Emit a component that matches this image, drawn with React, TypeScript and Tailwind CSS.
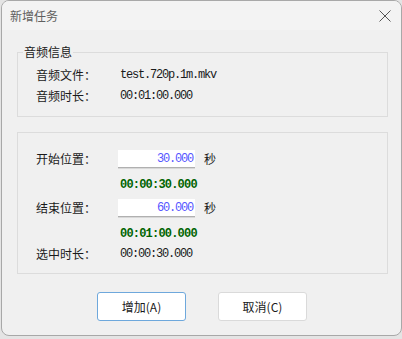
import React from "react";

const cjk = { fontFamily: '"Noto Sans CJK SC", "Liberation Sans", sans-serif' };
const mono = { fontFamily: '"Liberation Mono", "Noto Sans CJK SC", monospace' };

function Label({ children }: { children: React.ReactNode }) {
  return (
    <span className="w-[84px] shrink-0 text-[12px] text-[#1a1a1a]" style={cjk}>
      {children}
    </span>
  );
}

function Value({ children }: { children: React.ReactNode }) {
  return (
    <span className="text-[12px] tracking-[-1.2px] text-[#1a1a1a]" style={mono}>
      {children}
    </span>
  );
}

function Green({ children }: { children: React.ReactNode }) {
  return (
    <div className="flex h-[20px] items-center pl-[84px]">
      <span className="text-[12px] font-bold tracking-[-0.8px] text-[#006400]" style={mono}>
        {children}
      </span>
    </div>
  );
}

function InputRow({ label, value }: { label: string; value: string }) {
  return (
    <div className="flex h-[20px] items-center">
      <Label>{label}</Label>
      <div className="-ml-[2px] flex h-[18px] w-[77px] items-center justify-end border-b border-b-[#b0b0b0] bg-white pr-[2px] shadow-[0_1px_0_#d8d8d8]">
        <span className="text-[12px] tracking-[-1.2px] text-[#5555ff]" style={mono}>
          {value}
        </span>
      </div>
      <span className="ml-[9px] text-[12px] text-[#1a1a1a]" style={cjk}>
        秒
      </span>
    </div>
  );
}

export default function App() {
  return (
    <div className="h-[339px] w-[402px] bg-[#e4e4e4]">
      <div className="ml-[1px] flex h-[336px] w-[401px] flex-col overflow-hidden rounded-[8px] border border-[#a8a8a8] bg-[#f0f0f0]">
        {/* title bar */}
        <div className="flex h-[29px] shrink-0 items-center justify-between bg-[#f3f3f3] pl-[8px] pr-[9px]">
          <span className="text-[12px] text-[#606060]" style={cjk}>
            新增任务
          </span>
          <svg width="12" height="12" viewBox="0 0 12 12" className="mr-[1px]">
            <path d="M0.5 0.5 L11.5 11.5 M11.5 0.5 L0.5 11.5" stroke="#555" strokeWidth="1" fill="none" />
          </svg>
        </div>

        <div className="flex flex-col pl-[15px] pr-[13px]">
          {/* group 1 */}
          <fieldset className="mt-[14px] border border-[#dcdcdc] pb-[10px] pt-[4px]">
            <legend className="ml-[5px] px-[1px] text-[12px] leading-[16px] text-[#1a1a1a]" style={cjk}>
              音频信息
            </legend>
            <div className="flex flex-col pl-[18px]">
              <div className="flex h-[21px] items-center">
                <Label>音频文件：</Label>
                <Value>test.720p.1m.mkv</Value>
              </div>
              <div className="flex h-[21px] items-center">
                <Label>音频时长：</Label>
                <Value>00:01:00.000</Value>
              </div>
            </div>
          </fieldset>

          {/* group 2 */}
          <div className="mt-[15px] flex flex-col border border-[#dcdcdc] pb-[9px] pl-[18px] pt-[16px]">
            <InputRow label="开始位置：" value="30.000" />
            <div className="mt-[6px]">
              <Green>00:00:30.000</Green>
            </div>
            <div className="mt-[3px]">
              <InputRow label="结束位置：" value="60.000" />
            </div>
            <div className="mt-[6px]">
              <Green>00:01:00.000</Green>
            </div>
            <div className="flex h-[20px] items-center">
              <Label>选中时长：</Label>
              <Value>00:00:30.000</Value>
            </div>
          </div>

          {/* buttons */}
          <div className="mt-[18px] flex gap-[32px] pl-[80px]">
            <button
              className="flex h-[29px] w-[89px] items-center justify-center rounded-[3px] border border-[#6ea8dc] bg-white text-[12px] text-[#1a1a1a]"
              style={cjk}
            >
              增加(A)
            </button>
            <button
              className="flex h-[29px] w-[89px] items-center justify-center rounded-[3px] border border-[#dadada] bg-white text-[12px] text-[#1a1a1a]"
              style={cjk}
            >
              取消(C)
            </button>
          </div>
        </div>
      </div>
    </div>
  );
}
